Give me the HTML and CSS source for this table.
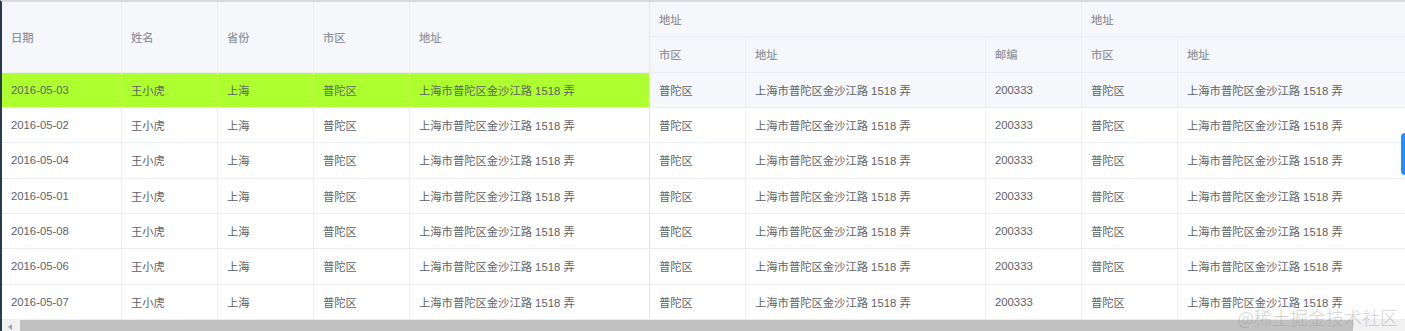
FILE: index.html
```html
<!DOCTYPE html>
<html lang="zh">
<head>
<meta charset="utf-8">
<title>Table</title>
<link rel="stylesheet" href="styles.css">
</head>
<body>
<div class="table">
  <div class="grid">
    <div class="th span-r">日期</div>
    <div class="th span-r">姓名</div>
    <div class="th span-r">省份</div>
    <div class="th span-r">市区</div>
    <div class="th span-r fixed-end">地址</div>
    <div class="th span-3">地址</div>
    <div class="th span-2">地址</div>
    <div class="th">市区</div>
    <div class="th">地址</div>
    <div class="th">邮编</div>
    <div class="th">市区</div>
    <div class="th">地址</div>

    <div class="td hl">2016-05-03</div><div class="td hl">王小虎</div><div class="td hl">上海</div><div class="td hl">普陀区</div><div class="td hl fixed-end">上海市普陀区金沙江路 1518 弄</div>
    <div class="td hv">普陀区</div><div class="td hv">上海市普陀区金沙江路 1518 弄</div><div class="td hv">200333</div><div class="td hv">普陀区</div><div class="td hv">上海市普陀区金沙江路 1518 弄</div>

    <div class="td">2016-05-02</div><div class="td">王小虎</div><div class="td">上海</div><div class="td">普陀区</div><div class="td fixed-end">上海市普陀区金沙江路 1518 弄</div>
    <div class="td">普陀区</div><div class="td">上海市普陀区金沙江路 1518 弄</div><div class="td">200333</div><div class="td">普陀区</div><div class="td">上海市普陀区金沙江路 1518 弄</div>

    <div class="td">2016-05-04</div><div class="td">王小虎</div><div class="td">上海</div><div class="td">普陀区</div><div class="td fixed-end">上海市普陀区金沙江路 1518 弄</div>
    <div class="td">普陀区</div><div class="td">上海市普陀区金沙江路 1518 弄</div><div class="td">200333</div><div class="td">普陀区</div><div class="td">上海市普陀区金沙江路 1518 弄</div>

    <div class="td">2016-05-01</div><div class="td">王小虎</div><div class="td">上海</div><div class="td">普陀区</div><div class="td fixed-end">上海市普陀区金沙江路 1518 弄</div>
    <div class="td">普陀区</div><div class="td">上海市普陀区金沙江路 1518 弄</div><div class="td">200333</div><div class="td">普陀区</div><div class="td">上海市普陀区金沙江路 1518 弄</div>

    <div class="td">2016-05-08</div><div class="td">王小虎</div><div class="td">上海</div><div class="td">普陀区</div><div class="td fixed-end">上海市普陀区金沙江路 1518 弄</div>
    <div class="td">普陀区</div><div class="td">上海市普陀区金沙江路 1518 弄</div><div class="td">200333</div><div class="td">普陀区</div><div class="td">上海市普陀区金沙江路 1518 弄</div>

    <div class="td">2016-05-06</div><div class="td">王小虎</div><div class="td">上海</div><div class="td">普陀区</div><div class="td fixed-end">上海市普陀区金沙江路 1518 弄</div>
    <div class="td">普陀区</div><div class="td">上海市普陀区金沙江路 1518 弄</div><div class="td">200333</div><div class="td">普陀区</div><div class="td">上海市普陀区金沙江路 1518 弄</div>

    <div class="td">2016-05-07</div><div class="td">王小虎</div><div class="td">上海</div><div class="td">普陀区</div><div class="td fixed-end">上海市普陀区金沙江路 1518 弄</div>
    <div class="td">普陀区</div><div class="td">上海市普陀区金沙江路 1518 弄</div><div class="td">200333</div><div class="td">普陀区</div><div class="td">上海市普陀区金沙江路 1518 弄</div>
  </div>
  <div class="scrollbar">
    <div class="arrow"></div>
    <div class="thumb"></div>
  </div>
  <div class="pill"></div>
  <div class="watermark">@稀土掘金技术社区</div>
</div>
</body>
</html>
```

FILE: styles.css
```css
html, body {
  margin: 0;
  padding: 0;
  background: #ffffff;
}

.table {
  position: relative;
  width: 1405px;
  height: 331px;
  box-sizing: border-box;
  overflow: hidden;
  border-top: 2px solid #d6d9de;
  border-left: 2px solid #2b3a4b;
  font-family: "Liberation Sans", "Noto Sans CJK SC", sans-serif;
  font-size: 11.3px;
  color: #606266;
}

.grid {
  display: grid;
  grid-template-columns: 120px 96px 96px 96px 240px 96px 240px 96px 96px 240px;
  grid-template-rows: repeat(9, 35.333px);
  width: 1416px;
}

.th,
.td {
  display: flex;
  align-items: center;
  box-sizing: border-box;
  padding-left: 9px;
  border-right: 1px solid #ebeef5;
  border-bottom: 1px solid #ebeef5;
  white-space: nowrap;
  overflow: hidden;
}

.th {
  background: #f5f7fa;
  color: #909399;
  font-weight: 500;
}

.span-r {
  grid-row: span 2;
}

.span-3 {
  grid-column: span 3;
}

.span-2 {
  grid-column: span 2;
}

.td {
  background: #ffffff;
}

.td.hl {
  background: #adff2f;
}

.td.hv {
  background: #f5f7fa;
}

.fixed-end {
  border-right-color: #e2e5ea;
}

.scrollbar {
  display: flex;
  align-items: stretch;
  height: 17px;
  background: #f1f1f1;
}

.arrow {
  width: 18px;
  position: relative;
}

.arrow::before {
  content: "";
  position: absolute;
  left: 6px;
  top: 4px;
  width: 0;
  height: 0;
  border-top: 3px solid transparent;
  border-bottom: 3px solid transparent;
  border-right: 4px solid #a3a3a3;
}

.thumb {
  width: 1333px;
  background: #c1c1c1;
}

.pill {
  position: absolute;
  right: -4px;
  top: 131px;
  width: 8px;
  height: 42px;
  border-radius: 4px;
  background: #1e90ff;
}

.watermark {
  position: absolute;
  right: 7px;
  bottom: 1px;
  font-family: "Noto Sans CJK SC", sans-serif;
  font-size: 18px;
  font-weight: 300;
  color: rgba(160, 160, 160, 0.5);
  letter-spacing: 0;
}
```
